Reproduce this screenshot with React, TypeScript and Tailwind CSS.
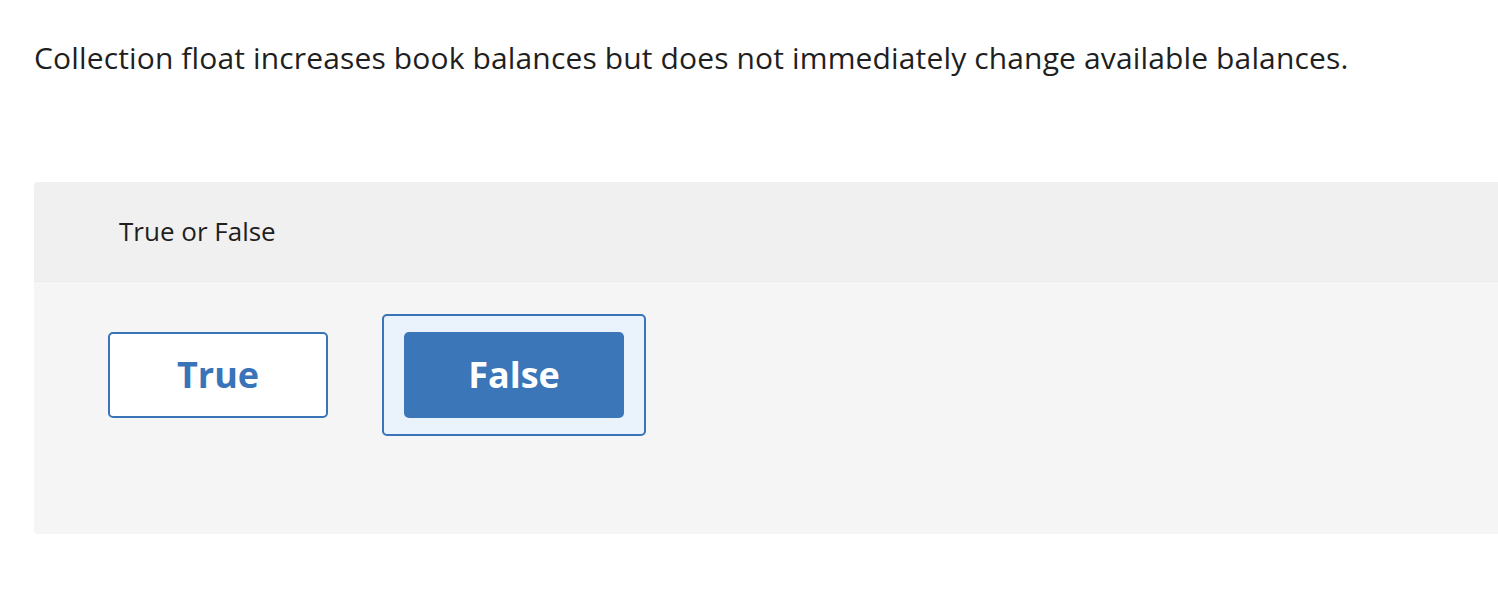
import React from 'react';

const font = { fontFamily: '"Open Sans", "Liberation Sans", sans-serif' };

const App: React.FC = () => {
  return (
    <div className="w-[1498px] h-[596px] bg-white overflow-hidden text-[#1f1f1f]" style={font}>
      <div className="pl-[34px] pt-[40px]">
        <p className="text-[30px] leading-[36px] tracking-[0.14px] whitespace-nowrap">
          Collection float increases book balances but does not immediately change available balances.
        </p>
      </div>

      <div className="ml-[34px] mt-[106px] w-[1500px] rounded-l-[4px] overflow-hidden">
        {/* header */}
        <div className="h-[100px] bg-[#f0f0f0] flex items-center pl-[85px] border-b border-[#ebebeb]">
          <span className="text-[26px]">True or False</span>
        </div>

        {/* body */}
        <div className="h-[252px] bg-[#f5f5f5] pl-[74px] pt-[32px] flex items-start gap-[54px]">
          <button className="mt-[18px] w-[220px] h-[86px] rounded-[5px] border-2 border-[#3a74b8] bg-white text-[#3a74b8] text-[36px] font-bold">
            True
          </button>
          <div className="w-[264px] h-[122px] rounded-[5px] border-2 border-[#3a74b8] bg-[#eaf2fb] flex items-center justify-center">
            <button className="w-[220px] h-[86px] rounded-[5px] bg-[#3b76b9] text-white text-[36px] font-bold">
              False
            </button>
          </div>
        </div>
      </div>
    </div>
  );
};

export default App;
